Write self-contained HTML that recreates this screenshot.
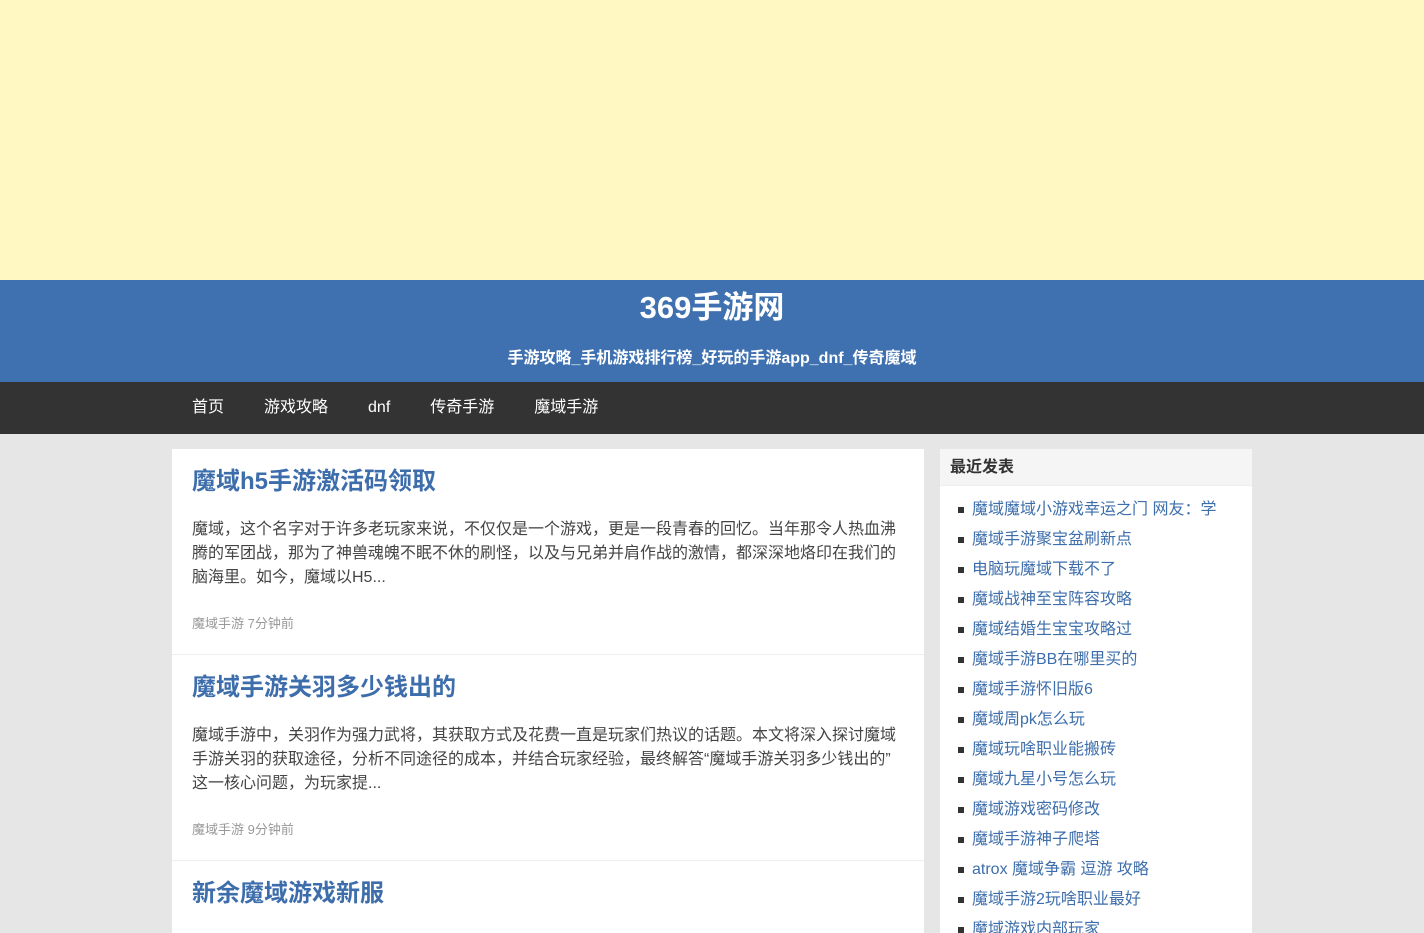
<!DOCTYPE html>
<html><head><meta charset="utf-8"><style>
*{margin:0;padding:0;box-sizing:border-box}
html,body{width:1424px;height:933px;overflow:hidden}
body{background:#e6e6e6;font-family:"Liberation Sans","Noto Sans CJK SC",sans-serif;position:relative}
.ad{height:280px;background:#fff8c2}
.hd{height:102px;background:#3f71b0;color:#fff;text-align:center}
.hd h1{font-size:31px;font-weight:bold;padding-top:8px;line-height:40px}
.hd p{font-size:16px;font-weight:bold;margin-top:20px;line-height:22px}
.nav{height:52px;background:#333;padding-left:192px}
.nav a{color:#fff;font-size:16px;line-height:52px;margin-right:40px;text-decoration:none;display:inline-block}
.main{position:absolute;left:172px;top:449px;width:752px;height:484px;background:#fff}
.post{padding:16px 20px 0;height:206px;border-bottom:1px solid #eee}
.post h2{font-size:24px;color:#3d6eab;line-height:34px;font-weight:bold}
.post p{font-size:16px;color:#444;line-height:24px;margin-top:19px;height:72px;width:708px}
.post .m{font-size:13px;color:#999;margin-top:23px}
.side{position:absolute;left:940px;top:449px;width:312px;background:#fff;height:484px;overflow:hidden}
.side h3{background:#f5f5f5;height:37px;line-height:38px;font-size:16px;color:#333;padding-left:10px;border-bottom:1px solid #eee}
.side ul{list-style:none;padding:9px 0 0 18px}
.side li{font-size:16px;color:#3d6eab;line-height:30px;position:relative;padding-left:14px;white-space:nowrap}
.side li:before{content:"";position:absolute;left:0;top:12px;width:6px;height:6px;background:#333}
</style></head><body>
<div class="ad"></div>
<div class="hd"><h1>369手游网</h1><p>手游攻略_手机游戏排行榜_好玩的手游app_dnf_传奇魔域</p></div>
<div class="nav"><a>首页</a><a>游戏攻略</a><a>dnf</a><a>传奇手游</a><a>魔域手游</a></div>
<div class="main">
<div class="post"><h2>魔域h5手游激活码领取</h2><p>魔域，这个名字对于许多老玩家来说，不仅仅是一个游戏，更是一段青春的回忆。当年那令人热血沸腾的军团战，那为了神兽魂魄不眠不休的刷怪，以及与兄弟并肩作战的激情，都深深地烙印在我们的脑海里。如今，魔域以H5...</p><div class="m">魔域手游 7分钟前</div></div>
<div class="post"><h2>魔域手游关羽多少钱出的</h2><p>魔域手游中，关羽作为强力武将，其获取方式及花费一直是玩家们热议的话题。本文将深入探讨魔域手游关羽的获取途径，分析不同途径的成本，并结合玩家经验，最终解答“魔域手游关羽多少钱出的”<br>这一核心问题，为玩家提...</p><div class="m">魔域手游 9分钟前</div></div>
<div class="post"><h2>新余魔域游戏新服</h2></div>
</div>
<div class="side"><h3>最近发表</h3><ul>
<li>魔域魔域小游戏幸运之门 网友：学</li><li>魔域手游聚宝盆刷新点</li><li>电脑玩魔域下载不了</li><li>魔域战神至宝阵容攻略</li><li>魔域结婚生宝宝攻略过</li><li>魔域手游BB在哪里买的</li><li>魔域手游怀旧版6</li><li>魔域周pk怎么玩</li><li>魔域玩啥职业能搬砖</li><li>魔域九星小号怎么玩</li><li>魔域游戏密码修改</li><li>魔域手游神子爬塔</li><li>atrox 魔域争霸 逗游 攻略</li><li>魔域手游2玩啥职业最好</li><li>魔域游戏内部玩家</li>
</ul></div>
</body></html>
